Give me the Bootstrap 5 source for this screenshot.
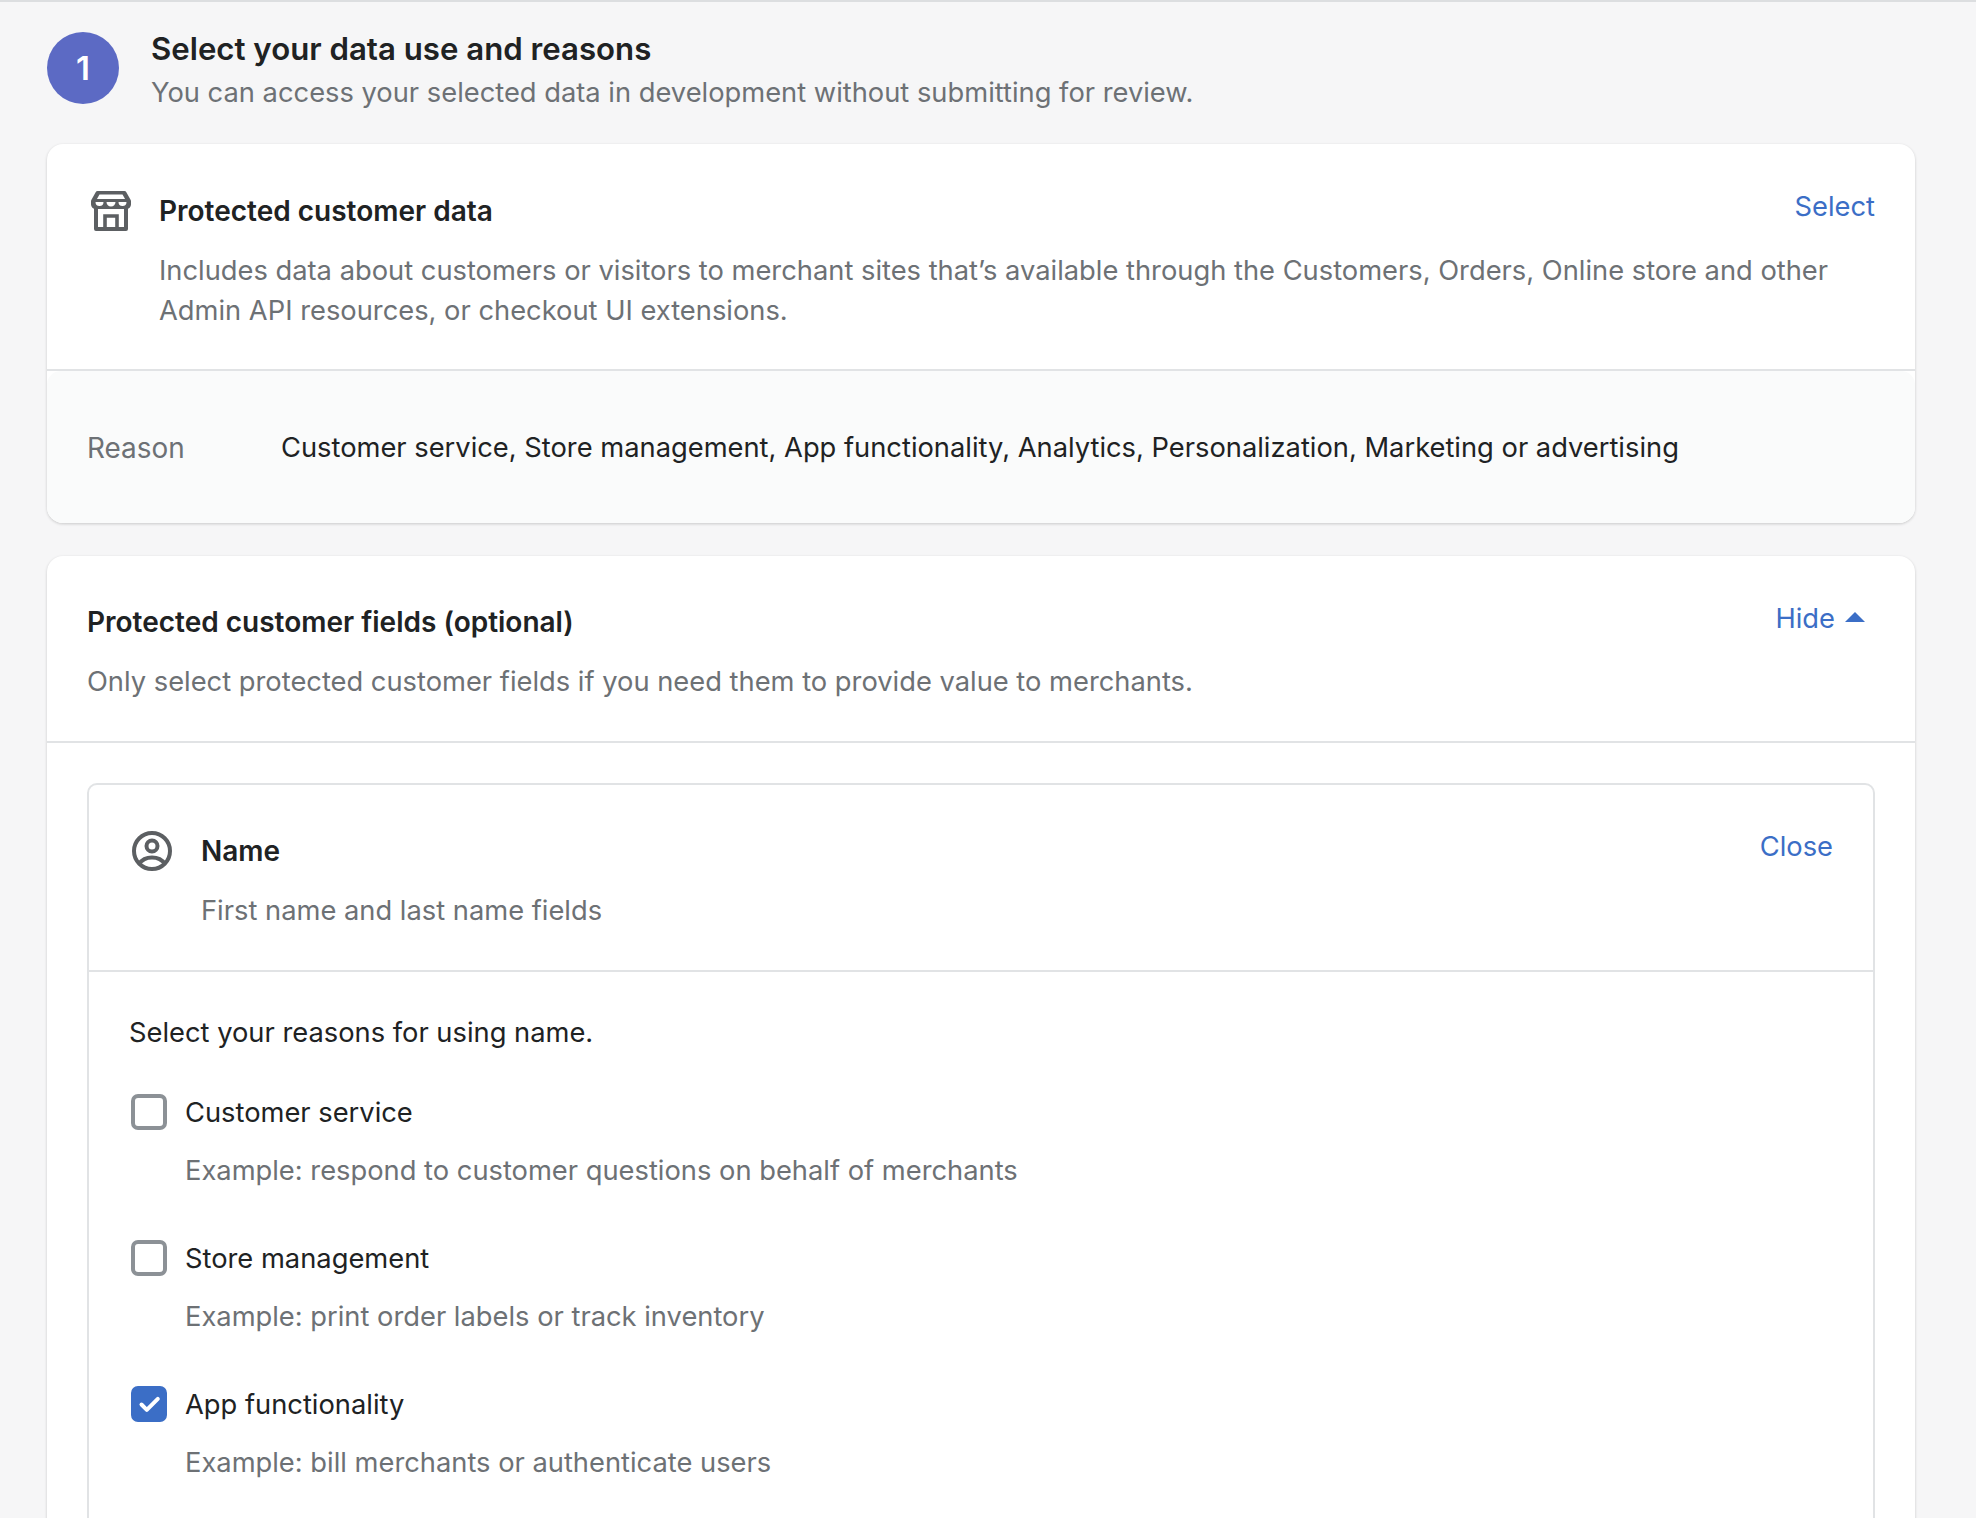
<!DOCTYPE html>
<html lang="en">
<head>
<meta charset="utf-8">
<title>Select your data use and reasons</title>
<link href="https://cdn.jsdelivr.net/npm/bootstrap@5.3.0/dist/css/bootstrap.min.css" rel="stylesheet">
<style>
html,body{height:1518px;overflow:hidden}
body{background:#f6f6f7;color:#202223;font-family:Inter,"Liberation Sans",sans-serif;font-size:27.3px;line-height:40px}
.shell{border-top:2px solid #dcdee0;padding:23px 61px 0 47px}
.muted{color:#6d7175}
.step{width:72px;height:72px;background:#5c6ac4;color:#fff;font-size:33px;font-weight:600;margin-top:7px}
.step-head{gap:32px;margin-bottom:31px}
.step-title{font-size:31.2px;font-weight:600;line-height:48px;margin:0}
.step-sub{line-height:40px;margin:0}
.pane{border:0;border-radius:16px;box-shadow:0 1px 3px rgba(23,24,24,.2);margin-bottom:33px;overflow:hidden}
.pane-head{padding:47px 40px 38px;border-bottom:2px solid #e1e3e5}
.pane-head-alt{padding:46px 40px 39px}
.pane-title{font-size:28px;font-weight:600;line-height:40px;margin:0}
.act{color:#3b6ec6;text-decoration:none;margin-top:-4px}
.ico{width:40px;height:40px;flex:none}
.g-store{margin-left:4px;margin-right:28px}
.reason{background:#fafbfb;padding:57px 40px 55px;display:flex;border-radius:14px 14px 0 0}
.reason-label{width:194px;color:#6d7175;font-size:27.9px}
.desc{margin:20px 0 0}
.ind-store{margin-left:72px}
.ind-name{margin-left:72px}
.inner-wrap{padding:40px 40px 0}
.box{border:2px solid #e1e3e5;border-radius:10px;height:900px}
.box-head{padding:46px 40px 39px;border-bottom:2px solid #e1e3e5}
.g-user{margin-left:3px;margin-right:29px}
.box-body{padding:41px 40px}
.pick{margin:0 0 40px}
.opt{margin-bottom:48px}
.opt .tick{width:36px;height:36px;margin:1px 18px 0 2px;flex:none;border:4px solid #8c9196;border-radius:7px;background-color:#fff;box-shadow:none;appearance:none;float:none}
.opt .tick:checked{background-color:#3b6ec6;border-color:#3b6ec6;background-image:url("data:image/svg+xml,%3csvg xmlns='http://www.w3.org/2000/svg' viewBox='0 0 28 28'%3e%3cpath fill='none' stroke='%23fff' stroke-width='4' stroke-linecap='round' stroke-linejoin='round' d='M6.500 14.500l5.300 5.300L22.800 8.800'/%3e%3c/svg%3e");background-size:100% 100%}
.opt-label{line-height:40px}
.opt-desc{margin:18px 0 0 56px}
.hide-lnk{margin-right:10px;margin-top:-7px;gap:10px}
.caret-up{margin-bottom:3px}
</style>
</head>
<body>
<main class="shell">
  <div class="d-flex align-items-start step-head">
    <div class="step rounded-circle d-flex align-items-center justify-content-center flex-shrink-0">1</div>
    <div>
      <h2 class="step-title">Select your data use and reasons</h2>
      <p class="step-sub muted">You can access your selected data in development without submitting for review.</p>
    </div>
  </div>

  <section class="card pane">
    <div class="pane-head">
      <div class="d-flex align-items-center">
        <svg class="ico g-store" viewBox="0 0 40 40"><path fill="#5c5f62" d="M6.500 0h27a2 2 0 0 1 1.700 1L40 9.500V13c0 3-2 5-5 5H5c-3 0-5-2-5-5V9.500L4.800 1a2 2 0 0 1 1.700-1z"/><path fill="#fff" d="M8.500 3.500h23l2.600 4.500H5.900z"/><path fill="#fff" d="M4.500 11h8a4 4 0 0 1-8 0zM15.500 11h9a4.500 4.500 0 0 1-9 0zM27.500 11h8a4 4 0 0 1-8 0z"/><path fill="none" stroke="#5c5f62" stroke-width="4" stroke-linejoin="round" d="M5 17v21h30V17"/><path fill="none" stroke="#5c5f62" stroke-width="3.600" d="M14 38V25h12v13"/></svg>
        <h3 class="pane-title flex-grow-1">Protected customer data</h3>
        <a class="act align-self-start" href="#">Select</a>
      </div>
      <p class="desc muted ind-store">Includes data about customers or visitors to merchant sites that’s available through the Customers, Orders, Online store and other Admin API resources, or checkout UI extensions.</p>
    </div>
    <div class="reason">
      <div class="reason-label">Reason</div>
      <div>Customer service, Store management, App functionality, Analytics, Personalization, Marketing or advertising</div>
    </div>
  </section>

  <section class="card pane">
    <div class="pane-head pane-head-alt">
      <div class="d-flex align-items-center">
        <h3 class="pane-title flex-grow-1">Protected customer fields (optional)</h3>
        <a class="act hide-lnk d-flex align-items-center" href="#">Hide <svg class="caret-up" width="20" height="10" viewBox="0 0 20 10"><path d="M10 0l10 10H0z" fill="#3b6ec6"/></svg></a>
      </div>
      <p class="desc muted">Only select protected customer fields if you need them to provide value to merchants.</p>
    </div>
    <div class="inner-wrap">
      <div class="box">
        <div class="box-head">
          <div class="d-flex align-items-center">
            <svg class="ico g-user" viewBox="0 0 40 40" fill="none" stroke="#5c5f62" stroke-width="4"><circle cx="20" cy="20" r="18"/><circle cx="20" cy="15" r="5.500"/><path d="M7 33c3-4.500 8-6.500 13-6.500s10 2 13 6.500"/></svg>
            <h4 class="pane-title flex-grow-1">Name</h4>
            <a class="act align-self-start" href="#">Close</a>
          </div>
          <p class="desc muted ind-name">First name and last name fields</p>
        </div>
        <div class="box-body">
          <p class="pick">Select your reasons for using name.</p>
          <div class="opt">
            <label class="d-flex opt-label"><input class="form-check-input tick" type="checkbox">Customer service</label>
            <p class="opt-desc muted">Example: respond to customer questions on behalf of merchants</p>
          </div>
          <div class="opt">
            <label class="d-flex opt-label"><input class="form-check-input tick" type="checkbox">Store management</label>
            <p class="opt-desc muted">Example: print order labels or track inventory</p>
          </div>
          <div class="opt">
            <label class="d-flex opt-label"><input class="form-check-input tick" type="checkbox" checked>App functionality</label>
            <p class="opt-desc muted">Example: bill merchants or authenticate users</p>
          </div>
        </div>
      </div>
    </div>
  </section>
</main>
<script src="https://cdn.jsdelivr.net/npm/bootstrap@5.3.0/dist/js/bootstrap.bundle.min.js"></script>
</body>
</html>
